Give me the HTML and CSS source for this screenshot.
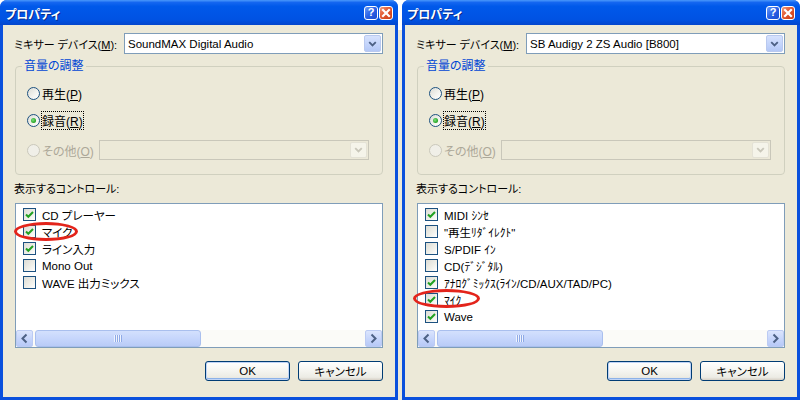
FILE: index.html
```html
<!DOCTYPE html>
<html lang="ja">
<head>
<meta charset="utf-8">
<title>プロパティ</title>
<link rel="stylesheet" href="styles.css">
</head>
<body>
<div class="desktop">

  <div class="window">
    <div class="titlebar">
      <span class="title">プロパティ</span>
      <div class="tb-buttons">
        <span class="tb-btn help">?</span>
        <span class="tb-btn close"><svg width="12" height="12" viewBox="0 0 12 12"><path d="M3 3 L9 9 M9 3 L3 9" stroke="#fff" stroke-width="2.2" stroke-linecap="square"/></svg></span>
      </div>
    </div>
    <div class="client">
      <div class="device-row">
        <span class="device-label">ミキサー デバイス(<u>M</u>):</span>
        <div class="combo">
          <span class="combo-text">SoundMAX Digital Audio</span>
          <span class="combo-btn"><svg width="16" height="16" viewBox="0 0 16 16"><path d="M4.5 6 L8 9.5 L11.5 6" fill="none" stroke="#4d6185" stroke-width="2"/></svg></span>
        </div>
      </div>
      <fieldset class="group">
        <legend>音量の調整</legend>
        <div class="radio-row"><span class="radio"></span><span class="rlabel">再生(<u>P</u>)</span></div>
        <div class="radio-row"><span class="radio checked"></span><span class="rlabel focus">録音(<u>R</u>)</span></div>
        <div class="radio-row disabled"><span class="radio"></span><span class="rlabel">その他(<u>O</u>)</span>
          <div class="combo combo-disabled">
            <span class="combo-text"></span>
            <span class="combo-btn"><svg width="16" height="16" viewBox="0 0 16 16"><path d="M4.5 6 L8 9.5 L11.5 6" fill="none" stroke="#c9c7ba" stroke-width="2"/></svg></span>
          </div>
        </div>
      </fieldset>
      <div class="list-label">表示するコントロール:</div>
      <div class="listbox">
        <div class="items">
          <div class="item"><span class="check on"><svg width="11" height="11" viewBox="0 0 11 11"><path d="M2 5.5 L4.3 7.8 L9 3" fill="none" stroke="#21a121" stroke-width="2"/></svg></span><span>CD プレーヤー</span></div>
          <div class="item"><span class="check on"><svg width="11" height="11" viewBox="0 0 11 11"><path d="M2 5.5 L4.3 7.8 L9 3" fill="none" stroke="#21a121" stroke-width="2"/></svg></span><span>マイク</span></div>
          <div class="item"><span class="check on"><svg width="11" height="11" viewBox="0 0 11 11"><path d="M2 5.5 L4.3 7.8 L9 3" fill="none" stroke="#21a121" stroke-width="2"/></svg></span><span>ライン入力</span></div>
          <div class="item"><span class="check"></span><span>Mono Out</span></div>
          <div class="item"><span class="check"></span><span>WAVE 出力ミックス</span></div>
        </div>
        <div class="hscroll">
          <span class="sb-btn"><svg width="15" height="15" viewBox="0 0 15 15"><path d="M9.5 3.5 L5.5 7.5 L9.5 11.5" fill="none" stroke="#4d6185" stroke-width="2"/></svg></span>
          <span class="sb-thumb"><span class="grip"></span></span>
          <span class="sb-track"></span>
          <span class="sb-btn"><svg width="15" height="15" viewBox="0 0 15 15"><path d="M5.5 3.5 L9.5 7.5 L5.5 11.5" fill="none" stroke="#4d6185" stroke-width="2"/></svg></span>
        </div>
        <span class="ellipse ellipse-a"></span>
      </div>
      <div class="buttons">
        <span class="btn default">OK</span>
        <span class="btn">キャンセル</span>
      </div>
    </div>
  </div>

  <div class="window">
    <div class="titlebar">
      <span class="title">プロパティ</span>
      <div class="tb-buttons">
        <span class="tb-btn help">?</span>
        <span class="tb-btn close"><svg width="12" height="12" viewBox="0 0 12 12"><path d="M3 3 L9 9 M9 3 L3 9" stroke="#fff" stroke-width="2.2" stroke-linecap="square"/></svg></span>
      </div>
    </div>
    <div class="client">
      <div class="device-row">
        <span class="device-label">ミキサー デバイス(<u>M</u>):</span>
        <div class="combo">
          <span class="combo-text">SB Audigy 2 ZS Audio [B800]</span>
          <span class="combo-btn"><svg width="16" height="16" viewBox="0 0 16 16"><path d="M4.5 6 L8 9.5 L11.5 6" fill="none" stroke="#4d6185" stroke-width="2"/></svg></span>
        </div>
      </div>
      <fieldset class="group">
        <legend>音量の調整</legend>
        <div class="radio-row"><span class="radio"></span><span class="rlabel">再生(<u>P</u>)</span></div>
        <div class="radio-row"><span class="radio checked"></span><span class="rlabel focus">録音(<u>R</u>)</span></div>
        <div class="radio-row disabled"><span class="radio"></span><span class="rlabel">その他(<u>O</u>)</span>
          <div class="combo combo-disabled">
            <span class="combo-text"></span>
            <span class="combo-btn"><svg width="16" height="16" viewBox="0 0 16 16"><path d="M4.5 6 L8 9.5 L11.5 6" fill="none" stroke="#c9c7ba" stroke-width="2"/></svg></span>
          </div>
        </div>
      </fieldset>
      <div class="list-label">表示するコントロール:</div>
      <div class="listbox">
        <div class="items">
          <div class="item"><span class="check on"><svg width="11" height="11" viewBox="0 0 11 11"><path d="M2 5.5 L4.3 7.8 L9 3" fill="none" stroke="#21a121" stroke-width="2"/></svg></span><span class="hw">MIDI ｼﾝｾ</span></div>
          <div class="item"><span class="check"></span><span class="hw">"再生ﾘﾀﾞｲﾚｸﾄ"</span></div>
          <div class="item"><span class="check"></span><span class="hw">S/PDIF ｲﾝ</span></div>
          <div class="item"><span class="check"></span><span class="hw">CD(ﾃﾞｼﾞﾀﾙ)</span></div>
          <div class="item"><span class="check on"><svg width="11" height="11" viewBox="0 0 11 11"><path d="M2 5.5 L4.3 7.8 L9 3" fill="none" stroke="#21a121" stroke-width="2"/></svg></span><span class="hw">ｱﾅﾛｸﾞﾐｯｸｽ(ﾗｲﾝ/CD/AUX/TAD/PC)</span></div>
          <div class="item"><span class="check on"><svg width="11" height="11" viewBox="0 0 11 11"><path d="M2 5.5 L4.3 7.8 L9 3" fill="none" stroke="#21a121" stroke-width="2"/></svg></span><span class="hw">ﾏｲｸ</span></div>
          <div class="item"><span class="check on"><svg width="11" height="11" viewBox="0 0 11 11"><path d="M2 5.5 L4.3 7.8 L9 3" fill="none" stroke="#21a121" stroke-width="2"/></svg></span><span class="hw">Wave</span></div>
        </div>
        <div class="hscroll">
          <span class="sb-btn"><svg width="15" height="15" viewBox="0 0 15 15"><path d="M9.5 3.5 L5.5 7.5 L9.5 11.5" fill="none" stroke="#4d6185" stroke-width="2"/></svg></span>
          <span class="sb-thumb"><span class="grip"></span></span>
          <span class="sb-track"></span>
          <span class="sb-btn"><svg width="15" height="15" viewBox="0 0 15 15"><path d="M5.5 3.5 L9.5 7.5 L5.5 11.5" fill="none" stroke="#4d6185" stroke-width="2"/></svg></span>
        </div>
        <span class="ellipse ellipse-b"></span>
      </div>
      <div class="buttons">
        <span class="btn default">OK</span>
        <span class="btn">キャンセル</span>
      </div>
    </div>
  </div>

</div>
</body>
</html>
```

FILE: styles.css
```css
* { box-sizing: border-box; }

html, body {
  margin: 0;
  padding: 0;
}

body {
  width: 800px;
  height: 400px;
  overflow: hidden;
  background: linear-gradient(#ffffff 0, #ffffff 30px, #ece9d8 30px);
  font-family: "Liberation Sans", "Noto Sans CJK JP", sans-serif;
  font-size: 11px;
  font-feature-settings: "palt";
  color: #000;
}

.desktop {
  display: flex;
  gap: 4px;
  height: 400px;
}

.window {
  width: 398px;
  height: 400px;
  display: flex;
  flex-direction: column;
  background: #0a50dd;
  border-radius: 7px 7px 0 0;
  overflow: hidden;
}

.titlebar {
  height: 25px;
  flex: none;
  display: flex;
  align-items: center;
  padding: 0 5px 0 5px;
  background: linear-gradient(180deg, #4a98fb 0%, #1466f0 10%, #0059ea 25%, #0055e6 55%, #0052e2 80%, #0446cc 100%);
}

.title {
  color: #fff;
  font-weight: bold;
  font-size: 12px;
  text-shadow: 1px 1px 0 #0b2a8a;
  flex: 1;
  padding-top: 1px;
}

.tb-buttons {
  display: flex;
  gap: 1px;
}

.tb-btn {
  width: 14px;
  height: 14px;
  border: 1px solid #fff;
  border-radius: 3px;
  display: flex;
  align-items: center;
  justify-content: center;
  color: #fff;
  font-weight: bold;
  font-size: 11px;
  line-height: 1;
}

.tb-btn.help {
  background: linear-gradient(135deg, #6b9bf8 0%, #2a62e6 50%, #1a4cd0 100%);
}

.tb-btn.close {
  background: linear-gradient(135deg, #f09a7c 0%, #e2572f 45%, #c93d16 100%);
}

.tb-btn svg { display: block; }

.client {
  flex: 1;
  margin: 0 3px 3px 3px;
  background: #ece9d8;
  padding: 8px 12px 0 12px;
  display: flex;
  flex-direction: column;
}

.device-row {
  height: 21px;
  display: flex;
  align-items: center;
}

.device-label {
  width: 109px;
  margin-left: -1px;
  margin-right: 1px;
  white-space: nowrap;
}

u { text-decoration: underline; text-underline-offset: 1px; }

.combo {
  flex: 1;
  height: 21px;
  border: 1px solid #7f9db9;
  background: #fff;
  display: flex;
  align-items: stretch;
  padding: 1px;
}

.combo-text {
  flex: 1;
  padding-left: 2px;
  display: flex;
  align-items: center;
  white-space: nowrap;
  font-size: 11.5px;
}

.combo-btn {
  width: 17px;
  border: 1px solid #b9c9ef;
  border-radius: 2px;
  background: linear-gradient(180deg, #d6e2fd 0%, #c2d3fb 60%, #b4c8f6 100%);
  display: flex;
  align-items: center;
  justify-content: center;
}

.group {
  margin: 6px 0 0 0;
  border: 1px solid #d0d0bf;
  border-radius: 4px;
  padding: 11px 12px 14px 11px;
  min-width: 0;
}

.group legend {
  margin-left: -5px;
  padding: 0 2px;
  color: #0046d5;
  font-size: 12px;
  line-height: 12px;
}

.radio-row {
  height: 20px;
  display: flex;
  align-items: center;
}

.radio-row + .radio-row { margin-top: 7px; }
.radio-row.disabled { margin-top: 10px; }

.radio {
  width: 13px;
  height: 13px;
  border-radius: 50%;
  border: 1px solid #1c5180;
  background: linear-gradient(135deg, #dcdcd5 0%, #f4f4f0 60%, #ffffff 100%);
  margin-right: 2px;
  display: flex;
  align-items: center;
  justify-content: center;
  flex: none;
}

.radio.checked::after {
  content: "";
  width: 5px;
  height: 5px;
  border-radius: 50%;
  background: radial-gradient(circle at 40% 40%, #7ee07e 0%, #21a121 70%, #178a17 100%);
}

.rlabel { white-space: nowrap; font-size: 12px; }

.rlabel.focus {
  outline: 1px dotted #000;
  outline-offset: 0;
}

.disabled .rlabel { color: #aca899; }

.disabled .radio {
  border-color: #cac8bb;
  background: #f0efe8;
}

.combo-disabled {
  flex: none;
  width: 270px;
  height: 20px;
  margin-left: auto;
  margin-right: 1px;
  border-color: #c9c7ba;
  background: #ece9d8;
}

.combo-disabled .combo-btn {
  border-color: #e4e2d6;
  background: #f5f4ea;
}

.list-label {
  margin-top: 7px;
  line-height: 14px;
  margin-left: -1px;
}

.listbox {
  position: relative;
  margin-top: 7px;
  height: 145px;
  border: 1px solid #7f9db9;
  background: #fff;
  display: flex;
  flex-direction: column;
}

.items {
  flex: 1;
  padding: 2px 0 0 7px;
  overflow: hidden;
}

.item {
  height: 17px;
  display: flex;
  align-items: center;
  white-space: nowrap;
  font-size: 11.5px;
}

.hw {
  font-feature-settings: normal;
}

.check {
  width: 13px;
  height: 13px;
  border: 1px solid #1c5180;
  background: linear-gradient(135deg, #dcdcd5 0%, #f0f0ea 60%, #ffffff 100%);
  margin-right: 6px;
  flex: none;
  display: flex;
  align-items: center;
  justify-content: center;
}

.check svg { display: block; }

.hscroll {
  height: 17px;
  flex: none;
  display: flex;
  background: #fbfbf8;
}

.sb-btn {
  width: 17px;
  height: 17px;
  border: 1px solid #bccbf3;
  border-radius: 2px;
  background: linear-gradient(180deg, #dbe5fd 0%, #c6d5fb 55%, #b7c9f7 100%);
  display: flex;
  align-items: center;
  justify-content: center;
  flex: none;
}

.sb-thumb {
  width: 166px;
  margin-left: 2px;
  border: 1px solid #a9bfee;
  border-radius: 3px;
  background: linear-gradient(180deg, #d3e0fd 0%, #c6d6fc 50%, #b9cbf7 100%);
  display: flex;
  align-items: center;
  justify-content: center;
  flex: none;
}

.grip {
  width: 8px;
  height: 7px;
  background: repeating-linear-gradient(90deg, #eef3fe 0 1px, #8faae6 1px 2px);
}

.sb-track { flex: 1; }

.ellipse {
  position: absolute;
  border: 3px solid #e3241b;
  border-radius: 50%;
  pointer-events: none;
}

.ellipse-a {
  left: -2px;
  top: 18px;
  width: 64px;
  height: 19px;
}

.ellipse-b {
  left: -5px;
  top: 85px;
  width: 67px;
  height: 19px;
}

.buttons {
  margin-top: 13px;
  display: flex;
  justify-content: flex-end;
  gap: 8px;
}

.btn {
  width: 85px;
  height: 20px;
  border: 1px solid #003c74;
  border-radius: 3px;
  background: linear-gradient(180deg, #ffffff 0%, #f7f7f3 40%, #ecebe4 85%, #d6d0c5 100%);
  display: flex;
  align-items: center;
  justify-content: center;
  white-space: nowrap;
  font-size: 11.5px;
}

.btn.default {
  box-shadow: inset 0 0 0 1px #c0d4f6, inset 0 -1px 0 1px #8db2e8;
}
```
